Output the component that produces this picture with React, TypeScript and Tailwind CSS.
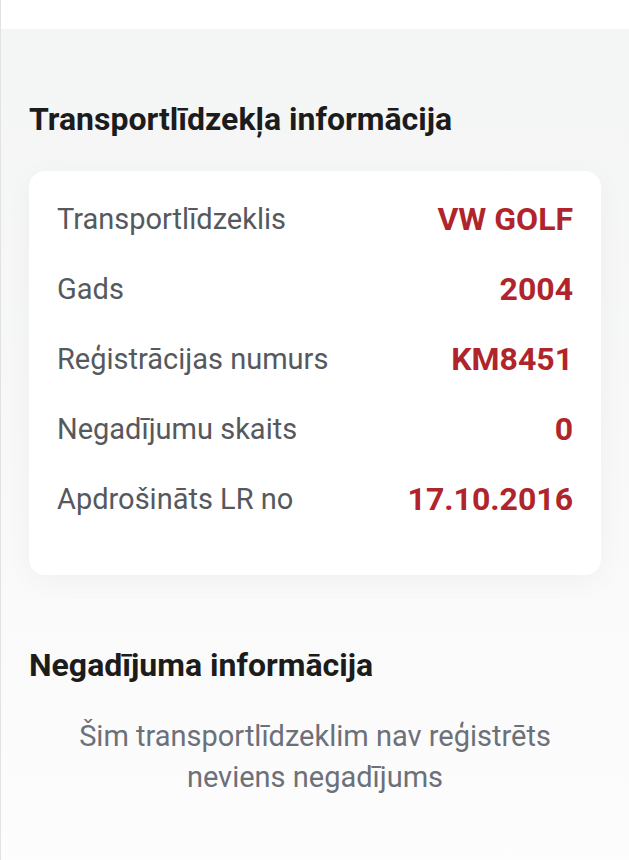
import React from 'react';

export default function App() {
  const rows = [
    { label: 'Transportlīdzeklis', value: 'VW GOLF' },
    { label: 'Gads', value: '2004' },
    { label: 'Reģistrācijas numurs', value: 'KM8451' },
    { label: 'Negadījumu skaits', value: '0' },
    { label: 'Apdrošināts LR no', value: '17.10.2016' },
  ];

  return (
    <main className="min-h-[860px] bg-white border-l border-[#e2e2e2] font-['Roboto',sans-serif]">
      {/* top strip */}
      <div className="h-[29px] bg-white"></div>

      <div className="bg-gradient-to-b from-[#f4f5f5] via-[#f8f8f8] to-[#fdfdfd] px-[28px] pt-[71px] pb-[80px]">
        {/* vehicle info */}
        <h2 className="text-[32px] leading-[38px] font-bold text-[#1c1c1c] mb-[33px]">
          Transportlīdzekļa informācija
        </h2>

        <div className="bg-white rounded-[16px] shadow-[0_6px_28px_rgba(0,0,0,0.04)] pl-[28px] pr-[28px] pt-[13px] pb-[41px]">
          {rows.map((r) => (
            <div key={r.label} className="flex items-center justify-between h-[70px]">
              <span className="text-[29px] leading-[70px] text-[#55595e]">{r.label}</span>
              <span className="text-[32px] leading-[70px] font-bold text-[#b0252b]">{r.value}</span>
            </div>
          ))}
        </div>

        {/* accident info */}
        <h2 className="mt-[71px] text-[32px] leading-[38px] font-bold text-[#1c1c1c]">
          Negadījuma informācija
        </h2>
        <p className="mt-[32px] text-center text-[29px] leading-[41px] text-[#6c7079]">
          Šim transportlīdzeklim nav reģistrēts
          <br />
          neviens negadījums
        </p>
      </div>
    </main>
  );
}
